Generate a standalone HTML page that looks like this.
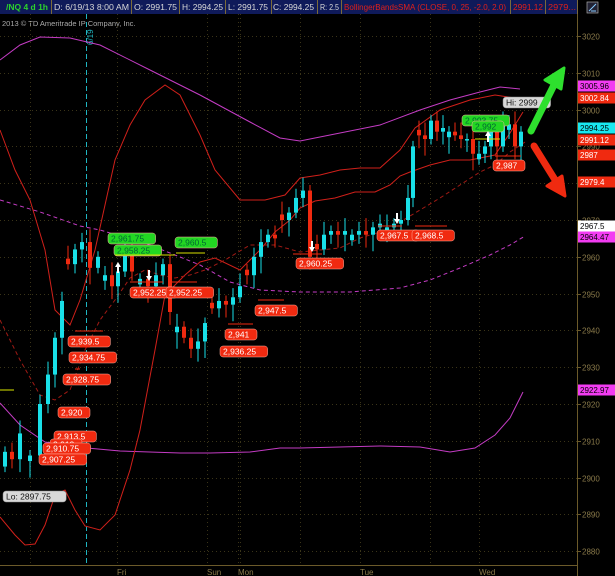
<!DOCTYPE html>
<html><head><meta charset="utf-8"><style>
body{margin:0;background:#000;width:615px;height:576px;overflow:hidden;font-family:"Liberation Sans",sans-serif}
svg{display:block}
</style></head><body>
<svg id="s" width="615" height="576" xmlns="http://www.w3.org/2000/svg" font-family="Liberation Sans, sans-serif">
<rect width="615" height="576" fill="#000"/>
<!-- header -->
<rect x="0" y="0" width="578" height="14" fill="#0f1a5a"/>
<g stroke="#7a6a3a" stroke-width="1">
<line x1="51.5" y1="0" x2="51.5" y2="14"/><line x1="131.5" y1="0" x2="131.5" y2="14"/><line x1="179.5" y1="0" x2="179.5" y2="14"/><line x1="225.5" y1="0" x2="225.5" y2="14"/><line x1="271.5" y1="0" x2="271.5" y2="14"/><line x1="317.5" y1="0" x2="317.5" y2="14"/><line x1="341.5" y1="0" x2="341.5" y2="14"/><line x1="510.5" y1="0" x2="510.5" y2="14"/><line x1="545.5" y1="0" x2="545.5" y2="14"/><line x1="577.5" y1="0" x2="577.5" y2="14"/>
</g>
<g font-size="8.5" fill="#d8d8d8" lengthAdjust="spacingAndGlyphs">
<text x="6" y="10" fill="#2cd22c" font-weight="bold" textLength="42" lengthAdjust="spacingAndGlyphs">/NQ 4 d 1h</text>
<text x="54" y="10" textLength="75" lengthAdjust="spacingAndGlyphs">D: 6/19/13 8:00 AM</text>
<text x="134" y="10" textLength="43" lengthAdjust="spacingAndGlyphs">O: 2991.75</text>
<text x="182" y="10" textLength="41" lengthAdjust="spacingAndGlyphs">H: 2994.25</text>
<text x="228" y="10" textLength="40" lengthAdjust="spacingAndGlyphs">L: 2991.75</text>
<text x="273" y="10" textLength="41" lengthAdjust="spacingAndGlyphs">C: 2994.25</text>
<text x="320" y="10" textLength="19" lengthAdjust="spacingAndGlyphs">R: 2.5</text>
<text x="344" y="10" fill="#e0201a" textLength="162" lengthAdjust="spacingAndGlyphs">BollingerBandsSMA (CLOSE, 0, 25, -2.0, 2.0)</text>
<text x="513" y="10" fill="#e0201a" textLength="30" lengthAdjust="spacingAndGlyphs">2991.12</text>
<text x="548" y="10" fill="#e0201a" textLength="28" lengthAdjust="spacingAndGlyphs">2979...</text>
</g>
<rect x="587" y="2" width="11" height="11" fill="#223" stroke="#aaa" stroke-width="0.7"/>
<path d="M589 11 L596 4 M591 11 H596" stroke="#8cf" stroke-width="1" fill="none"/>
<text x="2" y="26" font-size="7.5" fill="#aaa">2013 © TD Ameritrade IP Company, Inc.</text>
<line x1="577.5" y1="14" x2="577.5" y2="576" stroke="#6b5a2a"/>
<line x1="0" y1="565.5" x2="577" y2="565.5" stroke="#6b5a2a"/>
<g id="grid" stroke="#3a3418" stroke-dasharray="1,3"></g>
<g id="axis" font-size="8" fill="#8a7a4a"></g>
<g font-size="8" fill="#8a7a4a"><text x="117" y="575">Fri</text><text x="207" y="575">Sun</text><text x="238" y="575">Mon</text><text x="360" y="575">Tue</text><text x="479" y="575">Wed</text></g>
<line x1="86.5" y1="14" x2="86.5" y2="565" stroke="#1fb6c2" stroke-dasharray="5,3"/>
<text x="0" y="0" font-size="8" fill="#1fb6c2" transform="translate(93,45) rotate(-90)">6/19</text>
<line x1="0" y1="390" x2="14" y2="390" stroke="#b8c000" stroke-width="1.2"/>
<g fill="none" stroke-width="1">
<polyline stroke="#c43cc4" points="0,60 20,45 40,37 70,38 100,45 150,70 200,95 250,122 280,138 300,141 330,135 380,125 420,110 450,100 480,92 500,87 520,89"/>
<polyline stroke="#c43cc4" points="0,403 20,425 45,442 87,448 120,451 180,453 210,453 250,452 280,448 300,448 340,447 380,446 420,447 450,452 475,448 495,435 510,418 523,392"/>
<polyline stroke="#c43cc4" stroke-dasharray="4,3" points="0,200 40,212 80,226 100,230 150,245 200,265 230,282 260,290 300,292 350,292 400,288 430,280 460,268 490,255 510,245 525,236"/>
<polyline stroke="#d0201a" points="0,130 15,170 30,200 45,250 55,310 70,325 80,300 95,250 105,205 115,160 130,125 145,100 165,85 180,95 200,135 215,170 240,200 265,200 285,195 300,178 320,175 340,170 360,168 380,168 400,150 415,128 440,110 470,100 495,95 515,98 522,100"/>
<polyline stroke="#d0201a" points="0,517 15,535 25,545 35,544 45,525 55,495 65,490 75,510 85,526 100,530 115,515 130,470 140,430 155,350 165,295 185,275 200,262 215,258 240,270 260,250 275,232 290,220 300,208 315,201 335,198 355,192 375,192 390,185 400,176 410,172 430,165 450,160 470,160 495,155 510,133 523,112"/>
<polyline stroke="#a01a14" stroke-dasharray="4,3" points="0,320 20,360 40,395 55,400 70,390 85,350 100,320 115,300 130,278 145,270 160,275 175,278 190,275 205,270 225,260 250,245 275,245 300,252 320,250 340,248 360,238 380,232 400,222 420,210 440,198 460,185 480,172 495,165 510,152 525,142"/>
</g>
<g id="candles"></g>
<g id="labels" font-size="8.5"></g>
<path d="M531 131 L555 83" stroke="#2ee02e" stroke-width="7" stroke-linecap="round"/>
<path d="M564 68 L545 80 L561 89 Z" fill="#2ee02e" stroke="#2ee02e" stroke-width="3" stroke-linejoin="round"/>
<path d="M534 146 L557 183" stroke="#f02a10" stroke-width="7" stroke-linecap="round"/>
<path d="M565 196 L562 176 L547 186 Z" fill="#f02a10" stroke="#f02a10" stroke-width="3" stroke-linejoin="round"/>
</svg>
<script>
var NS="http://www.w3.org/2000/svg";
function el(p,t,a,txt){var e=document.createElementNS(NS,t);for(var k in a)e.setAttribute(k,a[k]);if(txt!=null)e.textContent=txt;p.appendChild(e);return e;}
function Y(p){return 36+(3020-p)*3.68;}
var g=document.getElementById('grid'),ax=document.getElementById('axis');
for(var p=2880;p<=3020;p+=10){var y=Math.round(Y(p))+0.5;el(g,'line',{x1:0,y1:y,x2:577,y2:y});el(ax,'line',{x1:577,y1:y,x2:581,y2:y,stroke:'#6b5a2a'});el(ax,'text',{x:582,y:y+3},String(p));}
[117,207,238,360,479,30,240,300,430].forEach(function(x){el(g,'line',{x1:x+.5,y1:14,x2:x+.5,y2:565});});
var pts=[[5,2907],[12,2905],[20,2912],[30,2906],[40,2920],[48,2928],[55,2938],[62,2948],[68,2958],[75,2962],[82,2964],[90,2957],[98,2960],[105,2955],[112,2952],[118,2956],[125,2961],[132,2956],[140,2954],[148,2952],[156,2955],[163,2958],[170,2945],[177,2941],[184,2938],[191,2935],[198,2937],[205,2942],[212,2946],[219,2948],[226,2947],[233,2949],[240,2952],[247,2955],[254,2960],[261,2964],[268,2966],[275,2965],[282,2970],[289,2972],[296,2976],[303,2978],[310,2960],[317,2962],[324,2966],[331,2967],[338,2966],[345,2967],[352,2966],[359,2967],[366,2966],[373,2968],[380,2969],[387,2968],[394,2969],[401,2970],[408,2976],[413,2990],[419,2993],[425,2992],[431,2997],[437,2994],[443,2995],[449,2994],[455,2993],[461,2992],[467,2992],[473,2988],[479,2988],[485,2990],[491,2995],[497,2990],[503,2998],[509,2996],[515,2990],[521,2994]];
var cg=document.getElementById('candles'),prev=2903;
pts.forEach(function(q,i){var x=q[0],c=q[1],o=prev;if(i%5==3)o=c+ (c>prev?1.5:-1.5);var up=c>=o;var col=up?'#19e0e8':'#f02a10';
var hi=Math.max(o,c)+1.5+(i%3),lo=Math.min(o,c)-1.5-(i%4);
el(cg,'line',{x1:x,y1:Y(hi),x2:x,y2:Y(lo),stroke:col,'stroke-width':1});
var t=Y(Math.max(o,c)),b=Y(Math.min(o,c));el(cg,'rect',{x:x-2,y:t,width:4,height:Math.max(1.5,b-t),fill:col});prev=c;});
var L=document.getElementById('labels');
function lab(x,y,t,bg,fg,w){w=w||t.length*5.2+6;el(L,'rect',{x:x,y:y,width:w,height:11,rx:3,fill:bg,stroke:bg=='#d8d8d8'?'#888':'#ffb0a0','stroke-width':0.5});el(L,'text',{x:x+3,y:y+8.5,fill:fg},t);}
var R='#f02a10',W='#fff';
[[68,336,'2,939.5'],[69,352,'2,934.75'],[63,374,'2,928.75'],[58,407,'2,920'],[54,431,'2,913.5'],[50,439,'2,912'],[43,443,'2,910.75'],[39,454,'2,907.25'],[130,287,'2,952.25'],[166,287,'2,952.25'],[255,305,'2,947.5'],[225,329,'2,941'],[220,346,'2,936.25'],[296,258,'2,960.25'],[377,230,'2,967.5'],[412,230,'2,968.5'],[493,160,'2,987']].forEach(function(a){lab(a[0],a[1],a[2],R,W);});
lab(108,233,'2,961.75','#22d622','#063');lab(114,245,'2,958.25','#22d622','#063');lab(175,237,'2,960.5','#22d622','#063');
lab(462,115,'2,993.75','#22d622','#063');lab(472,121,'2,992','#22d622','#063');
lab(3,491,'Lo: 2897.75','#d8d8d8','#111');lab(503,97,'Hi: 2999','#d8d8d8','#111');
[[75,331,103],[80,347,90],[75,369,80],[130,282,163],[168,282,197],[258,300,284],[228,324,253],[293,254,322],[378,226,402],[415,226,447],[495,156,521]].forEach(function(a){el(L,'line',{x1:a[0],y1:a[1],x2:a[2],y2:a[1],stroke:R,'stroke-width':1});});
[[115,255,175],[176,253,205],[475,139,500]].forEach(function(a){el(L,'line',{x1:a[0],y1:a[1],x2:a[2],y2:a[1],stroke:'#d8e000','stroke-width':1});});
function arr(x,y,up){var d=up?'M'+x+' '+y+' l-3 5 h2 v6 h2 v-6 h2 z':'M'+x+' '+y+' l-3 -5 h2 v-6 h2 v6 h2 z';el(L,'path',{d:d,fill:'#fff'});}
arr(118,262,true);arr(149,281,false);arr(312,252,false);arr(397,224,false);arr(488,131,true);
function al(y,t,bg,fg){el(L,'rect',{x:578,y:y-5.5,width:37,height:11,fill:bg});el(L,'text',{x:580,y:y+3,fill:fg,'font-size':8},t);}
al(86,'3005.96','#f23cf2','#000');al(98,'3002.84',R,'#fff');al(128,'2994.25','#19e8f0','#000');al(140,'2991.12',R,'#fff');al(155,'2987',R,'#fff');al(182,'2979.4',R,'#fff');al(226,'2967.5','#fff','#000');al(237,'2964.47','#f23cf2','#000');al(390,'2922.97','#f23cf2','#000');
</script>
</body></html>
